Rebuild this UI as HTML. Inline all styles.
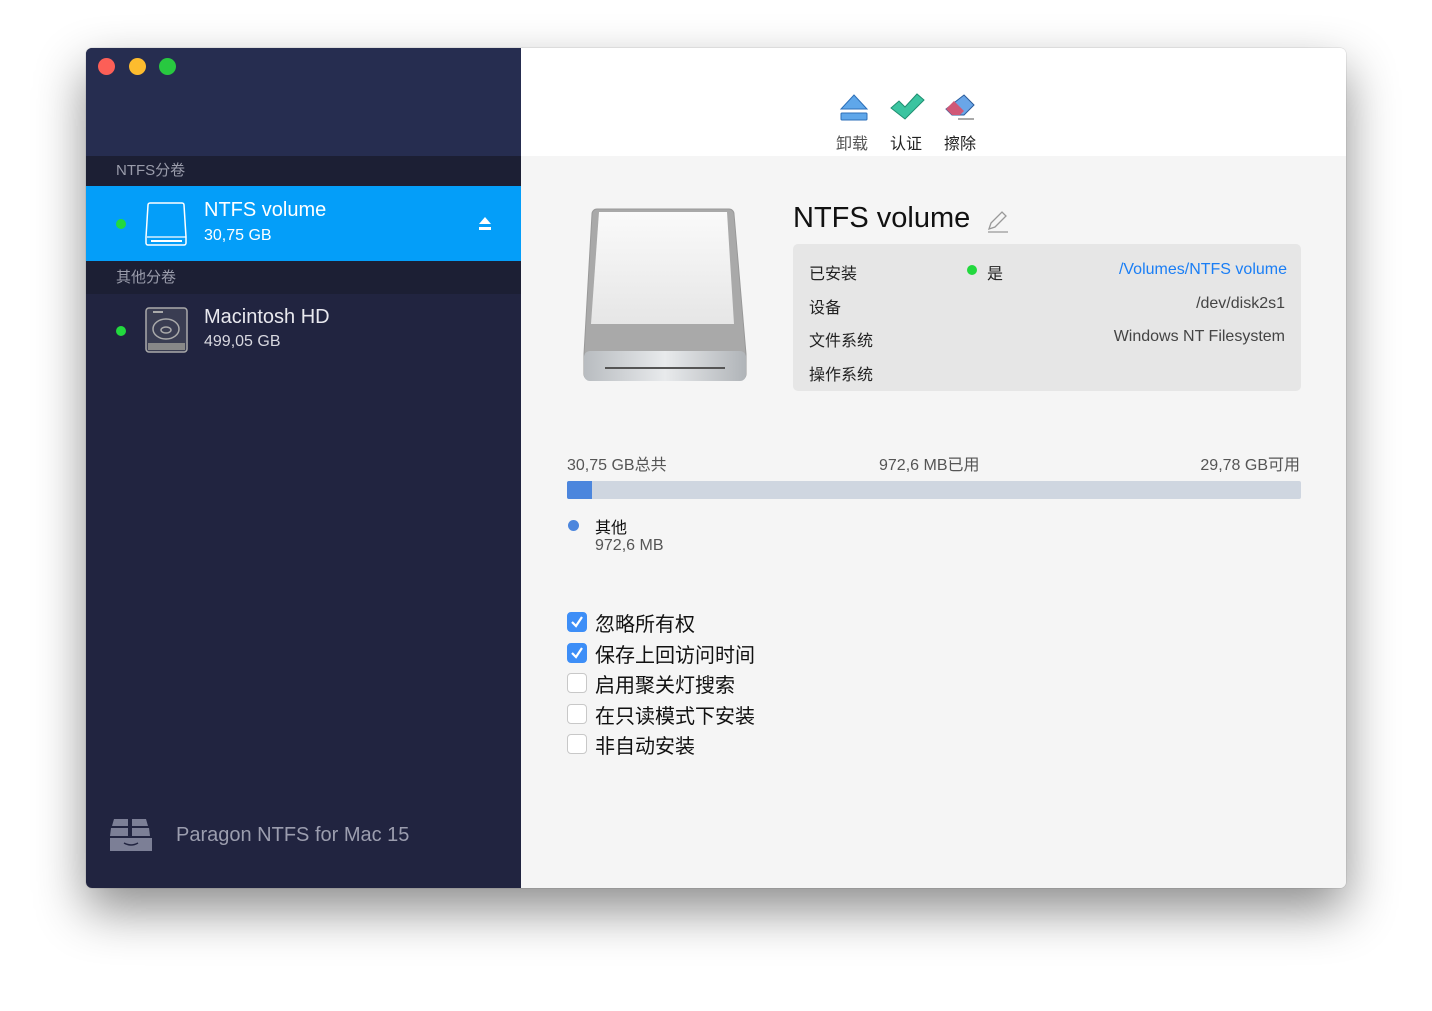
<!DOCTYPE html>
<html><head><meta charset="utf-8"><style>
*{margin:0;padding:0;box-sizing:border-box}
body{width:1432px;height:1011px;background:#fff;position:relative;overflow:hidden;font-family:"Liberation Sans","Noto Sans CJK SC",sans-serif}
.win{position:absolute;left:86px;top:48px;width:1260px;height:840px;border-radius:6px;overflow:hidden;box-shadow:0 22px 50px rgba(0,0,0,.45),0 0 1px rgba(0,0,0,.4);background:#f5f5f5}
.side{position:absolute;left:0;top:0;width:435px;height:840px;background:#212440}
.sidetop{position:absolute;left:0;top:0;width:435px;height:108px;background:#262d50}
.dot{position:absolute;top:10px;width:17px;height:17px;border-radius:50%}
.band{position:absolute;left:0;width:435px;background:#1c1f34;color:#9a9cab;font-size:15px;padding-left:30px}
.sel{position:absolute;left:0;top:138px;width:435px;height:75px;background:#049ef9}
.g{position:absolute;width:10px;height:10px;border-radius:50%;background:#22d93e}
.t1{position:absolute;font-size:20px;color:#fff}
.t2{position:absolute;font-size:16px;color:#fff}
.main{position:absolute;left:435px;top:0;width:825px;height:840px;background:#f5f5f5}
.tb{position:absolute;left:0;top:0;width:825px;height:108px;background:#fff}
.lbl{position:absolute;font-size:15px;color:#222}
.info{position:absolute;left:272px;top:196px;width:508px;height:147px;background:#e6e6e6;border-radius:5px}
.info div{position:absolute;font-size:16px;color:#222}
.cb{position:absolute;left:46px;width:20px;height:20px;border-radius:4px;border:1px solid #c8c8c8;background:#fff}
.cb.on{background:#3d8ef7;border-color:#3d8ef7}
.cbt{position:absolute;left:74px;font-size:20px;color:#111}
</style></head><body>
<div class="win">
<div class="side">
 <div class="sidetop"></div>
 <div class="dot" style="left:12px;background:#fc5f57"></div>
 <div class="dot" style="left:43px;background:#fdbc2e"></div>
 <div class="dot" style="left:73px;background:#28c840"></div>
 <div class="band" style="top:108px;height:30px;line-height:30px">NTFS分卷</div>
 <div class="sel"></div>
 <div class="g" style="left:30px;top:171px"></div>
 <svg style="position:absolute;left:59px;top:153px" width="43" height="45" viewBox="0 0 43 45"><path d="M5 2h32a2 2 0 0 1 2 2l2 32v6a2 2 0 0 1-2 2H3a2 2 0 0 1-2-2v-6L3 4a2 2 0 0 1 2-2z" fill="none" stroke="#fff" stroke-width="1.5"/><line x1="2" y1="36" x2="41" y2="36" stroke="#fff" stroke-width="1.2"/><line x1="6" y1="40" x2="37" y2="40" stroke="#fff" stroke-width="2"/></svg>
 <div class="t1" style="left:118px;top:151px">NTFS volume</div>
 <div class="t2" style="left:118px;top:179px">30,75 GB</div>
 <svg style="position:absolute;left:393px;top:169px" width="12" height="14"><path d="M6 0L12 7H0z" fill="#fff"/><rect y="10" width="12" height="3" fill="#fff"/></svg>
 <div class="band" style="top:213px;height:33px;line-height:33px">其他分卷</div>
 <div class="g" style="left:30px;top:278px"></div>
 <svg style="position:absolute;left:59px;top:259px" width="43" height="46" viewBox="0 0 43 46"><rect x="1" y="1" width="41" height="44" rx="3" fill="#3a3d52" stroke="#aaa" stroke-width="1.5"/><rect x="8" y="4" width="10" height="2" fill="#aaa"/><ellipse cx="21" cy="22" rx="13" ry="10" fill="none" stroke="#aaa" stroke-width="1.5"/><ellipse cx="21" cy="23" rx="5" ry="3" fill="none" stroke="#aaa" stroke-width="1.5"/><rect x="3" y="36" width="37" height="7" fill="#888"/></svg>
 <div class="t1" style="left:118px;top:258px;color:#e8e8ee">Macintosh HD</div>
 <div class="t2" style="left:118px;top:285px;color:#d8d8e0">499,05 GB</div>
 <svg style="position:absolute;left:24px;top:771px" width="42" height="32" viewBox="0 0 42 32"><path d="M4 0h14v7H2zM22 0h14l2 7H22zM1 9h17v8H0zM22 9h17l1 8H22zM0 19h42v13H0z" fill="#7c7f96"/><path d="M14 24q7 4 14 0" stroke="#212440" stroke-width="1.5" fill="none"/></svg>
 <div style="position:absolute;left:90px;top:776px;font-size:20px;color:#9b9dae">Paragon NTFS for Mac 15</div>
</div>
<div class="main">
 <div class="tb">
  <svg style="position:absolute;left:318px;top:46px" width="30" height="28"><path d="M15 1L28 15H2z" fill="#5fa7ea" stroke="#2c6fb8"/><rect x="2" y="19" width="26" height="7" rx="1" fill="#5fa7ea" stroke="#2c6fb8"/></svg>
  <svg style="position:absolute;left:368px;top:44px" width="36" height="30"><path d="M2 16l8-7 6 6L28 2l7 6-19 19z" fill="#3bc4a0" stroke="#1e8e70"/></svg>
  <svg style="position:absolute;left:423px;top:45px" width="32" height="30"><path d="M20 2l10 10-10 10H8L2 16z" fill="#6aa6e8" stroke="#2a5b9a"/><path d="M10 8l10 10-4 4H8l-6-6z" fill="#d05877"/><line x1="14" y1="26" x2="30" y2="26" stroke="#555"/></svg>
  <div class="lbl" style="left:315px;top:82px;color:#555;font-size:16px">卸载</div>
  <div class="lbl" style="left:369px;top:82px;font-size:16px">认证</div>
  <div class="lbl" style="left:423px;top:82px;font-size:16px">擦除</div>
 </div>
 <svg style="position:absolute;left:62px;top:158px" width="164" height="180" viewBox="0 0 164 180"><defs><linearGradient id="a" x1="0" y1="0" x2="0" y2="1"><stop offset="0" stop-color="#fafafa"/><stop offset="1" stop-color="#e6e6e6"/></linearGradient><linearGradient id="b" x1="0" y1="0" x2="1" y2="0"><stop offset="0" stop-color="#b8bcc0"/><stop offset=".5" stop-color="#e8eaec"/><stop offset="1" stop-color="#b0b4b8"/></linearGradient></defs><path d="M14 3h132a5 5 0 0 1 5 5l12 140v20a6 6 0 0 1-6 6H7a6 6 0 0 1-6-6v-20L9 8a5 5 0 0 1 5-5z" fill="#a9a9a9" stroke="#999"/><path d="M16 6h128l7 112H8z" fill="url(#a)"/><rect x="1" y="145" width="162" height="30" rx="6" fill="url(#b)"/><line x1="22" y1="162" x2="142" y2="162" stroke="#555" stroke-width="2"/></svg>
 <div style="position:absolute;left:272px;top:154px;font-size:29px;color:#111">NTFS volume</div>
 <svg style="position:absolute;left:465px;top:162px" width="24" height="24"><path d="M3 19l2-6 11-11 4 4-11 11z M2 22h20" fill="none" stroke="#999" stroke-width="1.3"/></svg>
 <div class="info">
  <div style="left:16px;top:16px">已安装</div>
  <div style="left:174px;top:21px;width:10px;height:10px;border-radius:50%;background:#22d93e"></div>
  <div style="left:194px;top:16px">是</div>
  <div style="right:14px;top:17px;color:#1a7ef5">/Volumes/NTFS volume</div>
  <div style="left:16px;top:50px">设备</div>
  <div style="right:16px;top:51px;color:#444">/dev/disk2s1</div>
  <div style="left:16px;top:83px">文件系统</div>
  <div style="right:16px;top:84px;color:#444">Windows NT Filesystem</div>
  <div style="left:16px;top:117px">操作系统</div>
 </div>
 <div style="position:absolute;left:46px;top:403px;font-size:16px;color:#555">30,75 GB总共</div>
 <div style="position:absolute;left:358px;top:403px;font-size:16px;color:#555">972,6 MB已用</div>
 <div style="position:absolute;right:46px;top:403px;font-size:16px;color:#555">29,78 GB可用</div>
 <div style="position:absolute;left:46px;top:433px;width:734px;height:18px;background:#cfd6e0;border-radius:2px"></div>
 <div style="position:absolute;left:46px;top:433px;width:25px;height:18px;background:#4c86dd;border-radius:2px 0 0 2px"></div>
 <div style="position:absolute;left:47px;top:472px;width:11px;height:11px;border-radius:50%;background:#4c86dd"></div>
 <div style="position:absolute;left:74px;top:466px;font-size:16px;color:#111">其他</div>
 <div style="position:absolute;left:74px;top:489px;font-size:16px;color:#555">972,6 MB</div>
 <div class="cb on" style="top:564px"><svg width="18" height="18"><path d="M4 9l4 4 6-9" stroke="#fff" stroke-width="2.2" fill="none"/></svg></div><div class="cbt" style="top:560px">忽略所有权</div>
 <div class="cb on" style="top:595px"><svg width="18" height="18"><path d="M4 9l4 4 6-9" stroke="#fff" stroke-width="2.2" fill="none"/></svg></div><div class="cbt" style="top:591px">保存上回访问时间</div>
 <div class="cb" style="top:625px"></div><div class="cbt" style="top:621px">启用聚关灯搜索</div>
 <div class="cb" style="top:656px"></div><div class="cbt" style="top:652px">在只读模式下安装</div>
 <div class="cb" style="top:686px"></div><div class="cbt" style="top:682px">非自动安装</div>
</div>
</div>
</body></html>
